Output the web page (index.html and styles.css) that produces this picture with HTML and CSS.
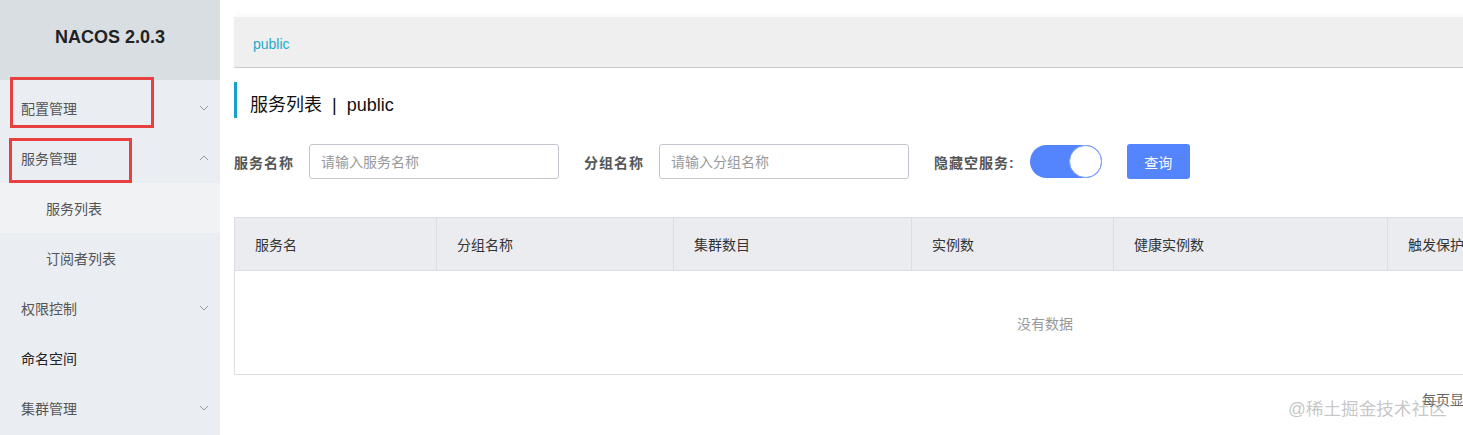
FILE: index.html
```html
<!DOCTYPE html>
<html lang="zh-CN">
<head>
    <meta charset="UTF-8">
    <title>Nacos - 服务列表</title>
    <link rel="stylesheet" href="styles.css">
</head>
<body>
    <div class="layout">
        <aside class="sidebar">
            <div class="logo">NACOS 2.0.3</div>
            <ul class="menu">
                <li class="menu-item">
                    <span>配置管理</span>
                    <svg class="arrow" width="10" height="6" viewBox="0 0 10 6"><path d="M1 1l4 4 4-4" fill="none" stroke="#999" stroke-width="1"/></svg>
                </li>
                <li class="menu-item">
                    <span>服务管理</span>
                    <svg class="arrow" width="10" height="6" viewBox="0 0 10 6"><path d="M1 5l4-4 4 4" fill="none" stroke="#999" stroke-width="1"/></svg>
                </li>
                <li class="menu-item sub active"><span>服务列表</span></li>
                <li class="menu-item sub"><span>订阅者列表</span></li>
                <li class="menu-item">
                    <span>权限控制</span>
                    <svg class="arrow" width="10" height="6" viewBox="0 0 10 6"><path d="M1 1l4 4 4-4" fill="none" stroke="#999" stroke-width="1"/></svg>
                </li>
                <li class="menu-item dark"><span>命名空间</span></li>
                <li class="menu-item">
                    <span>集群管理</span>
                    <svg class="arrow" width="10" height="6" viewBox="0 0 10 6"><path d="M1 1l4 4 4-4" fill="none" stroke="#999" stroke-width="1"/></svg>
                </li>
            </ul>
        </aside>

        <main class="main">
            <div class="ns-bar"><span class="ns-link">public</span></div>

            <h2 class="page-title">服务列表&nbsp;&nbsp;|&nbsp;&nbsp;public</h2>

            <div class="search">
                <label class="field-label">服务名称</label>
                <input class="field-input" type="text" placeholder="请输入服务名称">
                <label class="field-label">分组名称</label>
                <input class="field-input" type="text" placeholder="请输入分组名称">
                <label class="field-label">隐藏空服务:</label>
                <span class="switch"><span class="knob"></span></span>
                <button class="btn-primary">查询</button>
            </div>

            <div class="table-wrap">
                <table class="table">
                    <thead>
                        <tr>
                            <th class="c1">服务名</th>
                            <th class="c2">分组名称</th>
                            <th class="c3">集群数目</th>
                            <th class="c4">实例数</th>
                            <th class="c5">健康实例数</th>
                            <th class="c6">触发保护阈值</th>
                            <th class="c7">操作</th>
                        </tr>
                    </thead>
                    <tbody>
                        <tr>
                            <td class="empty" colspan="7">没有数据</td>
                        </tr>
                    </tbody>
                </table>
            </div>

            <div class="pager">每页显示</div>
        </main>
    </div>

    <!-- annotation boxes drawn on the screenshot -->
    <div class="mark mark-config"></div>
    <div class="mark mark-service"></div>
    <div class="watermark">@稀土掘金技术社区</div>
</body>
</html>
```

FILE: styles.css
```css
body {
    margin: 0;
    width: 1463px;
    height: 435px;
    overflow: hidden;
    background: #fff;
    font-family: "Liberation Sans", "Noto Sans CJK SC", sans-serif;
    font-size: 14px;
    color: #333;
    position: relative;
}

.layout {
    display: flex;
    height: 435px;
}

/* sidebar */
.sidebar {
    width: 220px;
    flex: none;
    background: #eaedf1;
}

.logo {
    height: 80px;
    background: #d9dee3;
    display: flex;
    align-items: center;
    justify-content: center;
    font-weight: bold;
    font-size: 18px;
    color: #222;
    padding-bottom: 5px;
    box-sizing: border-box;
}

.menu {
    list-style: none;
    margin: 0;
    padding: 3px 0 0;
}

.menu-item {
    height: 50px;
    display: flex;
    align-items: center;
    justify-content: space-between;
    padding: 0 11px 0 21px;
    color: #555;
}

.menu-item.sub {
    padding-left: 46px;
}

.menu-item.active {
    background: #f0f2f4;
}

.menu-item.dark {
    color: #222;
}

.arrow {
    display: block;
}

/* main */
.main {
    flex: 1;
    min-width: 0;
    padding-left: 14px;
    overflow: hidden;
}

.ns-bar {
    margin-top: 17px;
    height: 51px;
    background: #efefef;
    border-bottom: 1px solid #ccc;
    box-shadow: 0 -3px 4px rgba(0, 0, 0, 0.025);
    display: flex;
    align-items: center;
    padding: 3px 0 0 19px;
    box-sizing: border-box;
}

.ns-link {
    color: #25a9cc;
    font-size: 14px;
}

.page-title {
    margin: 14px 0 0;
    height: 36px;
    box-sizing: border-box;
    border-left: 3px solid #1aa0cb;
    padding: 5px 0 0 13px;
    font-size: 18px;
    font-weight: normal;
    color: #111;
    display: flex;
    align-items: center;
}

.search {
    display: flex;
    align-items: center;
    margin-top: 26px;
    height: 35px;
}

.field-label {
    font-weight: bold;
    color: #555;
    letter-spacing: 1px;
    margin-right: 15px;
}

.field-input {
    width: 250px;
    height: 35px;
    box-sizing: border-box;
    border: 1px solid #c4c6cf;
    border-radius: 3px;
    padding: 0 11px;
    margin-right: 25px;
    font-family: inherit;
    font-size: 14px;
    color: #333;
    outline: none;
}

.field-input::placeholder {
    color: #999;
}

.switch {
    width: 72px;
    height: 33px;
    border-radius: 17px;
    background: #5584ff;
    display: flex;
    justify-content: flex-end;
    align-items: center;
    margin-right: 25px;
}

.knob {
    width: 31px;
    height: 31px;
    border-radius: 50%;
    background: #fff;
    border: 1px solid #7d9ff5;
}

.btn-primary {
    width: 63px;
    height: 35px;
    border: none;
    border-radius: 3px;
    background: #5584ff;
    color: #fff;
    font-family: inherit;
    font-size: 14px;
    padding: 0;
}

/* table */
.table-wrap {
    margin-top: 38px;
    width: 1622px;
}

.table {
    width: 100%;
    border-collapse: collapse;
    border: 1px solid #dcdee3;
    table-layout: fixed;
}

.table th {
    box-sizing: border-box;
    height: 53px;
    background: #ebecf0;
    border-right: 1px solid #dcdee3;
    border-bottom: 1px solid #dcdee3;
    text-align: left;
    font-weight: normal;
    color: #333;
    padding: 0 20px;
    white-space: nowrap;
}

.c1 { width: 202px; }
.c2 { width: 237px; }
.c3 { width: 238px; }
.c4 { width: 202px; }
.c5 { width: 274px; }
.c6 { width: 220px; }

.empty {
    height: 103px;
    text-align: center;
    color: #999;
    padding: 0;
}

.pager {
    margin-top: 14px;
    padding-left: 1188px;
    color: #666;
    white-space: nowrap;
}

/* overlays */
.mark {
    position: absolute;
    border: 3px solid #e8403f;
    box-sizing: border-box;
}

.mark-config {
    left: 10px;
    top: 77px;
    width: 144px;
    height: 51px;
}

.mark-service {
    left: 9px;
    top: 138px;
    width: 123px;
    height: 45px;
}

.watermark {
    position: absolute;
    left: 1288px;
    top: 395px;
    font-size: 17.6px;
    color: rgba(150, 150, 150, 0.55);
    white-space: nowrap;
}
```
